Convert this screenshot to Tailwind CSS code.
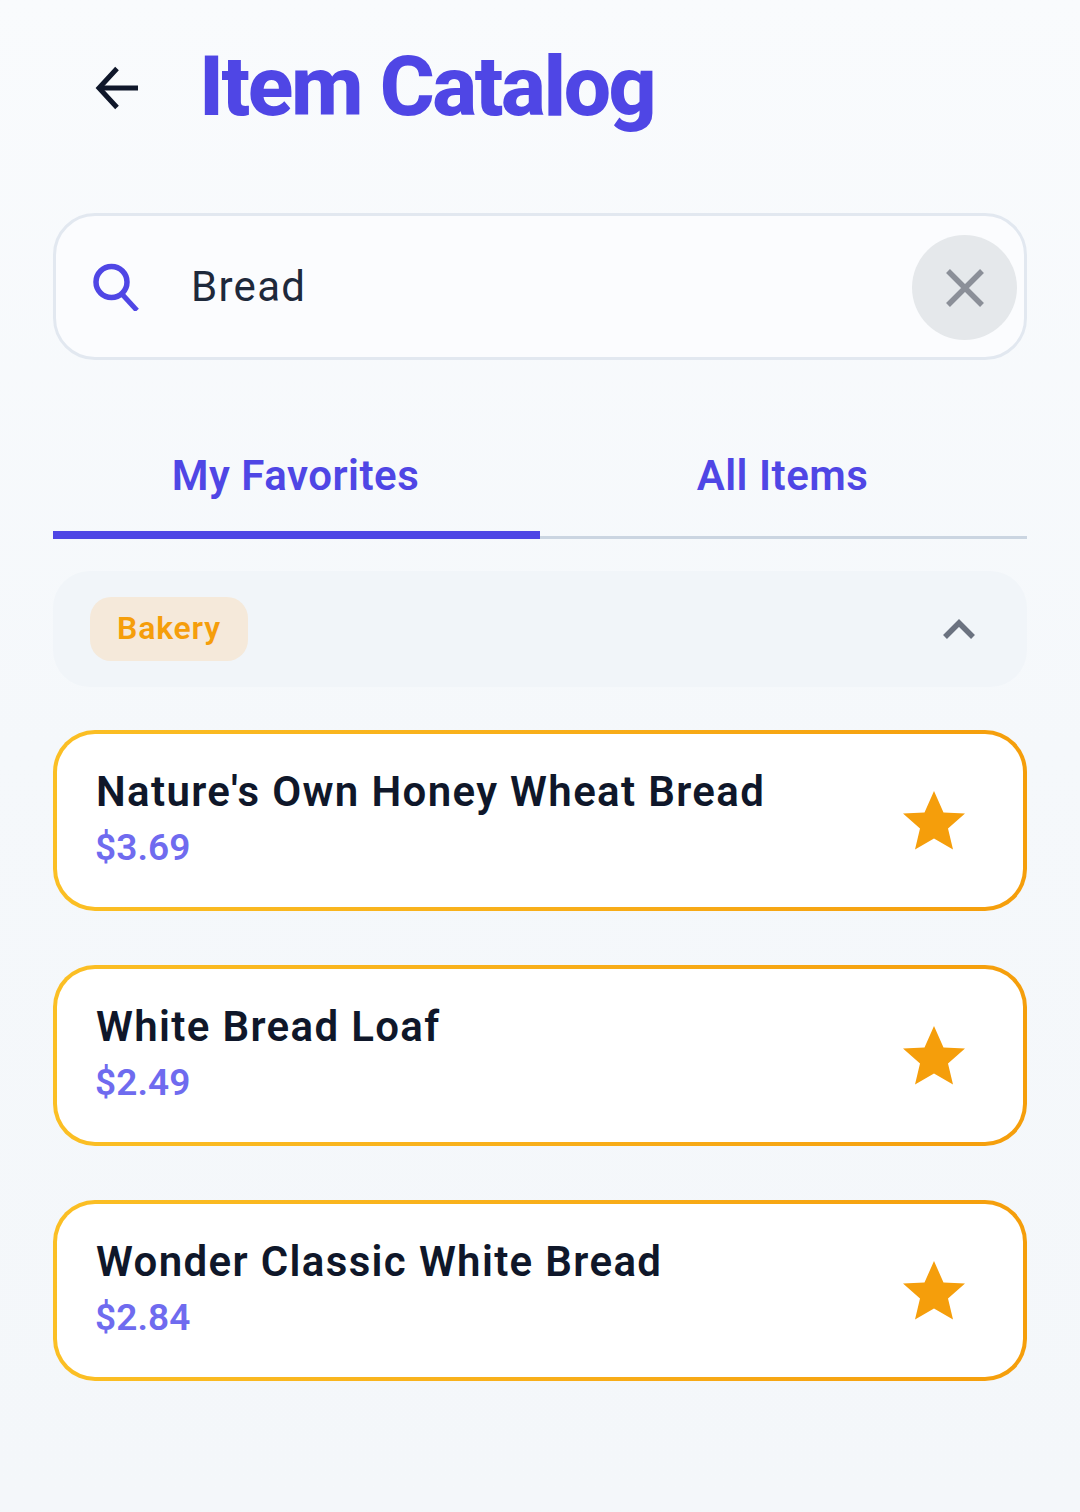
<!DOCTYPE html>
<html lang="en">
<head>
    <meta charset="UTF-8">
    <meta name="viewport" content="width=device-width, initial-scale=1.0">
    <title>Item Catalog</title>
    <script src="https://cdn.jsdelivr.net/npm/@tailwindcss/browser@4"></script>
</head>
<body class="font-['Roboto',sans-serif]">

<div class="w-[1080px] h-[1512px] overflow-hidden bg-gradient-to-b from-[#f9fbfd] via-[#f5f8fb] to-[#f4f7fa] px-[53px]">

    <!-- Header -->
    <header class="flex items-center h-[176px]">
        <svg class="ml-[40px] w-[48px] h-[48px] text-[#0f172a]" viewBox="0 0 48 48" fill="none" stroke="currentColor" stroke-width="5">
            <path d="M45 24H6"/>
            <path d="M24 4.500L6 24l18 19.500"/>
        </svg>
        <h1 class="ml-[58px] mb-[2px] text-[84px] font-extrabold tracking-[-2.4px] text-[#4f46e5] leading-none">Item Catalog</h1>
    </header>

    <!-- Search -->
    <div class="flex items-center h-[147px] mt-[37px] border-[3px] border-[#e2e8f0] rounded-[42px] bg-[#fbfcfe] pl-[36px] pr-[7px]">
        <svg class="w-[48px] h-[48px]" viewBox="0 0 48 48" fill="none" stroke="#4f46e5">
            <circle cx="19.500" cy="19" r="15.500" stroke-width="5.500"/>
            <path d="M29 30l16 17.500" stroke-width="5"/>
        </svg>
        <span class="ml-[51px] text-[42px] tracking-[1.3px] text-[#1e293b] leading-none">Bread</span>
        <button class="ml-auto mt-[2px] w-[105px] h-[105px] rounded-full bg-[#e5e8eb] flex items-center justify-center">
            <svg class="w-[40px] h-[40px]" viewBox="0 0 40 40" fill="none" stroke="#8b8f98" stroke-width="5.500">
                <path d="M3 3l34 34M37 3L3 37"/>
            </svg>
        </button>
    </div>

    <!-- Tabs -->
    <div class="flex mt-[69px] h-[110px]">
        <div class="w-1/2 flex items-start justify-center border-b-[8px] border-[#4f46e5] pr-[2px]">
            <span class="mt-[26px] text-[42px] font-semibold tracking-[0.5px] text-[#4f46e5] leading-none">My Favorites</span>
        </div>
        <div class="w-1/2 flex items-start justify-center border-b-[3px] border-[#cbd5e1] pr-[2px]">
            <span class="mt-[26px] text-[42px] font-semibold tracking-[0.5px] text-[#4f46e5] leading-none">All Items</span>
        </div>
    </div>

    <!-- Category -->
    <div class="flex items-center justify-between h-[116px] mt-[32px] rounded-[37px] bg-[#f1f5f9] pl-[37px] pr-[52px]">
        <span class="flex items-center justify-center w-[158px] h-[64px] rounded-[21px] bg-[#f5e9da] text-[32px] font-semibold tracking-[0.8px] text-[#f59e0b] pb-[2px]">Bakery</span>
        <svg class="w-[32px] h-[20px]" viewBox="0 0 32 20" fill="none" stroke="#6b7280" stroke-width="5.500">
            <path d="M2 18L16 4l14 14"/>
        </svg>
    </div>

    <!-- Items -->
    <div class="flex flex-col gap-[54px] mt-[43px]">
        <div class="rounded-[42px] p-[4px] bg-gradient-to-r from-[#fbbf24] to-[#f59e0b]">
            <div class="flex items-center justify-between h-[173px] rounded-[38px] bg-white pl-[39px] pr-[58px]">
                <div class="pb-[2px]">
                    <p class="mt-[-1px] mb-[1px] text-[42px] font-semibold tracking-[1.35px] text-[#0f172a] leading-[56px]">Nature's Own Honey Wheat Bread</p>
                    <p class="text-[37px] font-semibold tracking-[0.1px] text-[#6f6bef] leading-[54px] ml-[-1px]">$3.69</p>
                </div>
                <svg class="w-[62px] h-[60px]" viewBox="0 0 62 60" fill="#f59e0b"><path d="M31 0l9.500 21.500L62 22.500 45 37.500l5 21-19-11-19 11 5-21L0 22.500l21.500-1z"/></svg>
            </div>
        </div>
        <div class="rounded-[42px] p-[4px] bg-gradient-to-r from-[#fbbf24] to-[#f59e0b]">
            <div class="flex items-center justify-between h-[173px] rounded-[38px] bg-white pl-[39px] pr-[58px]">
                <div class="pb-[2px]">
                    <p class="mt-[-1px] mb-[1px] text-[42px] font-semibold tracking-[1.35px] text-[#0f172a] leading-[56px]">White Bread Loaf</p>
                    <p class="text-[37px] font-semibold tracking-[0.1px] text-[#6f6bef] leading-[54px] ml-[-1px]">$2.49</p>
                </div>
                <svg class="w-[62px] h-[60px]" viewBox="0 0 62 60" fill="#f59e0b"><path d="M31 0l9.500 21.500L62 22.500 45 37.500l5 21-19-11-19 11 5-21L0 22.500l21.500-1z"/></svg>
            </div>
        </div>
        <div class="rounded-[42px] p-[4px] bg-gradient-to-r from-[#fbbf24] to-[#f59e0b]">
            <div class="flex items-center justify-between h-[173px] rounded-[38px] bg-white pl-[39px] pr-[58px]">
                <div class="pb-[2px]">
                    <p class="mt-[-1px] mb-[1px] text-[42px] font-semibold tracking-[1.35px] text-[#0f172a] leading-[56px]">Wonder Classic White Bread</p>
                    <p class="text-[37px] font-semibold tracking-[0.1px] text-[#6f6bef] leading-[54px] ml-[-1px]">$2.84</p>
                </div>
                <svg class="w-[62px] h-[60px]" viewBox="0 0 62 60" fill="#f59e0b"><path d="M31 0l9.500 21.500L62 22.500 45 37.500l5 21-19-11-19 11 5-21L0 22.500l21.500-1z"/></svg>
            </div>
        </div>
    </div>
</div>

</body>
</html>
